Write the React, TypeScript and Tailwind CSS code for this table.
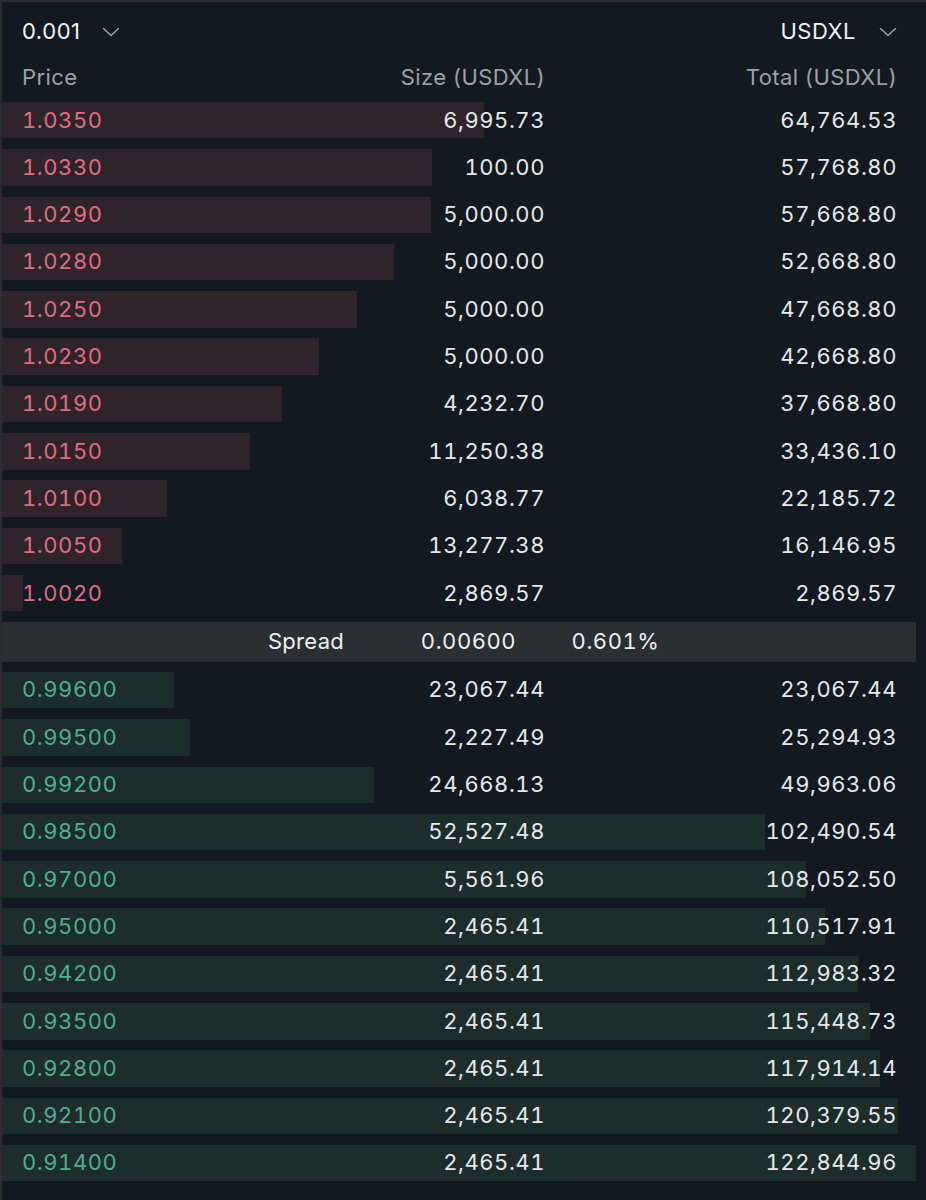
import React from "react";

const asks: [string, string, string, number][] = [
  ["1.0350", "6,995.73", "64,764.53", 482],
  ["1.0330", "100.00", "57,768.80", 430],
  ["1.0290", "5,000.00", "57,668.80", 429],
  ["1.0280", "5,000.00", "52,668.80", 392],
  ["1.0250", "5,000.00", "47,668.80", 355],
  ["1.0230", "5,000.00", "42,668.80", 317],
  ["1.0190", "4,232.70", "37,668.80", 280],
  ["1.0150", "11,250.38", "33,436.10", 248],
  ["1.0100", "6,038.77", "22,185.72", 165],
  ["1.0050", "13,277.38", "16,146.95", 120],
  ["1.0020", "2,869.57", "2,869.57", 21],
];

const bids: [string, string, string, number][] = [
  ["0.99600", "23,067.44", "23,067.44", 172],
  ["0.99500", "2,227.49", "25,294.93", 188],
  ["0.99200", "24,668.13", "49,963.06", 372],
  ["0.98500", "52,527.48", "102,490.54", 763],
  ["0.97000", "5,561.96", "108,052.50", 804],
  ["0.95000", "2,465.41", "110,517.91", 823],
  ["0.94200", "2,465.41", "112,983.32", 856],
  ["0.93500", "2,465.41", "115,448.73", 868],
  ["0.92800", "2,465.41", "117,914.14", 878],
  ["0.92100", "2,465.41", "120,379.55", 896],
  ["0.91400", "2,465.41", "122,844.96", 914],
];

function Chevron() {
  return (
    <svg width="18" height="10" viewBox="0 0 18 10" fill="none" className="shrink-0">
      <path d="M1.5 1.5 L9 8.5 L16.5 1.5" stroke="#a3a8ad" strokeWidth="1.4" strokeLinecap="round" strokeLinejoin="round" />
    </svg>
  );
}

function Row({ r, side }: { r: [string, string, string, number]; side: "ask" | "bid" }) {
  return (
    <div className="relative h-[47.3px]">
      <div
        className={`absolute left-0 top-[5.6px] h-[36.5px] ${side === "ask" ? "bg-[#2e2429]" : "bg-[#1c2d2b]"}`}
        style={{ width: r[3] }}
      />
      <div className="relative grid h-full grid-cols-[250px_273px_352px] items-center pl-[20px] tabular-nums tracking-[0.55px]">
        <span className={side === "ask" ? "text-[#e06b83]" : "text-[#4fae8b]"}>{r[0]}</span>
        <span className="text-right text-[#e6e8ea]">{r[1]}</span>
        <span className="text-right text-[#e6e8ea]">{r[2]}</span>
      </div>
    </div>
  );
}

export default function App() {
  return (
    <div
      className="h-[1200px] w-[926px] bg-[#2a2c2f] pl-[2px] pt-[2px] text-[22px]"
      style={{ fontFamily: "Inter, 'Noto Sans', sans-serif" }}
    >
      <div className="h-[1198px] w-[924px] bg-[#121920] pr-[10px]">
        <div className="flex h-[59px] items-center justify-between pl-[20px] pr-[19px]">
          <div className="flex items-center gap-[21px]">
            <span className="tracking-[0.55px] text-[#f2f3f4]">0.001</span>
            <Chevron />
          </div>
          <div className="flex items-center gap-[23px]">
            <span className="tracking-[0.5px] text-[#f2f3f4]">USDXL</span>
            <Chevron />
          </div>
        </div>
        <div className="mb-[9.4px] grid h-[26px] grid-cols-[250px_273px_352px] items-center pl-[20px] text-[#9ba1a6] tracking-[0.4px]">
          <span>Price</span>
          <span className="text-right">Size (USDXL)</span>
          <span className="text-right">Total (USDXL)</span>
        </div>
        {asks.map((r, i) => (
          <Row key={"a" + i} r={r} side="ask" />
        ))}
        <div className="flex h-[49.7px] items-center">
          <div className="flex h-[40px] w-full items-center bg-[#2a2f31] pl-[224px] text-[#eef0f1] tabular-nums">
            <span className="w-[160px] text-center tracking-[0.3px]">Spread</span>
            <span className="w-[165px] text-center tracking-[0.55px]">0.00600</span>
            <span className="w-[129px] text-center tracking-[0.55px]">0.601%</span>
          </div>
        </div>
        {bids.map((r, i) => (
          <Row key={"b" + i} r={r} side="bid" />
        ))}
      </div>
    </div>
  );
}
